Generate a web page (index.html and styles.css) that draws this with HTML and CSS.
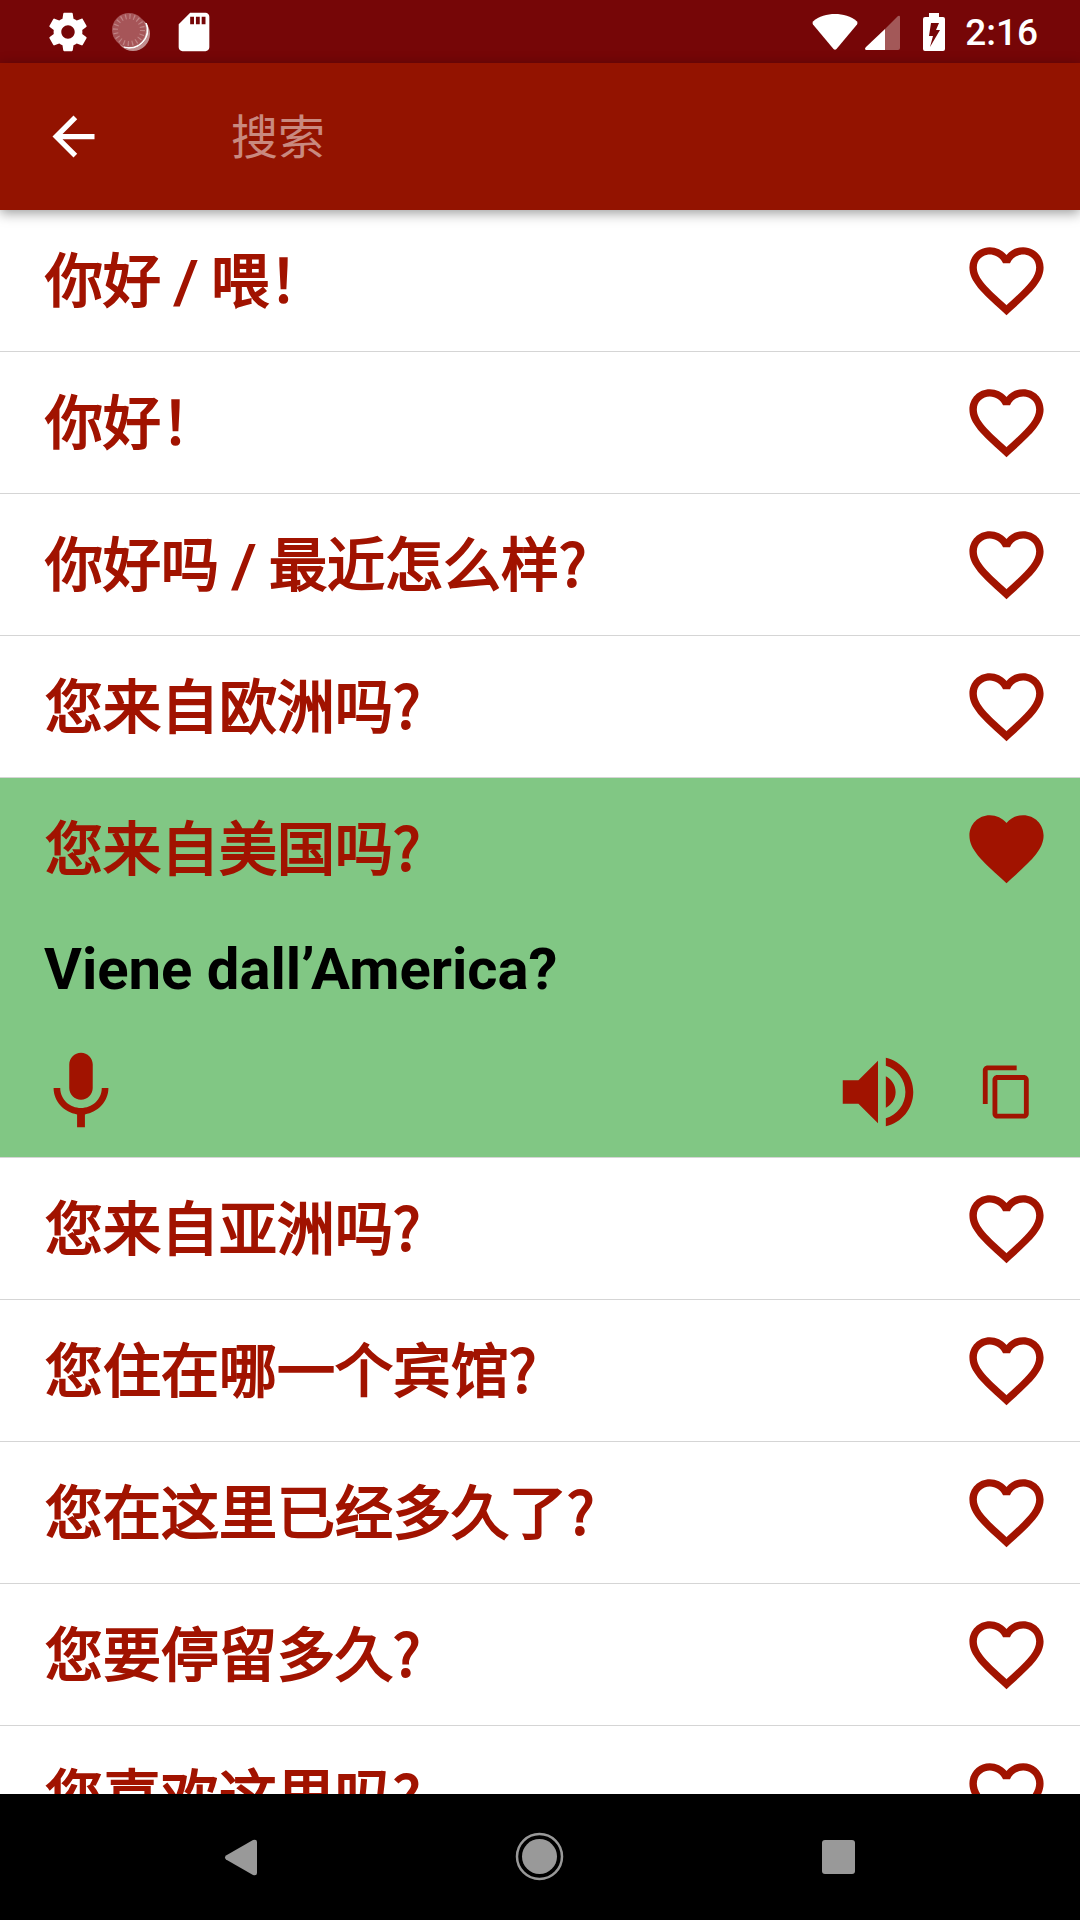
FILE: index.html
```html
<!DOCTYPE html>
<html lang="zh-CN">
<head>
<meta charset="utf-8">
<meta name="viewport" content="width=device-width, initial-scale=1">
<title>搜索</title>
<link rel="stylesheet" href="styles.css">
</head>
<body>
<svg class="sprite" aria-hidden="true">
  <symbol id="heart-outline" viewBox="0 0 24 24"><path d="M16.5 3c-1.74 0-3.41.81-4.5 2.09C10.91 3.81 9.24 3 7.5 3 4.42 3 2 5.42 2 8.5c0 3.78 3.4 6.86 8.55 11.54L12 21.35l1.45-1.32C18.6 15.36 22 12.28 22 8.5 22 5.42 19.58 3 16.5 3zm-4.4 15.55l-.1.1-.1-.1C7.14 14.24 4 11.39 4 8.5 4 6.5 5.5 5 7.5 5c1.54 0 3.04.99 3.57 2.36h1.87C13.46 5.99 14.96 5 16.5 5c2 0 3.5 1.5 3.5 3.5 0 2.89-3.14 5.74-7.9 10.05z"/></symbol>
  <symbol id="heart" viewBox="0 0 24 24"><path d="M12 21.35l-1.45-1.32C5.4 15.36 2 12.28 2 8.5 2 5.42 4.42 3 7.5 3c1.74 0 3.41.81 4.5 2.09C13.09 3.81 14.76 3 16.5 3 19.58 3 22 5.42 22 8.5c0 3.78-3.4 6.86-8.55 11.54L12 21.35z"/></symbol>
</svg>

<div class="status-bar">
  <div class="status-group status-notices">
    <svg class="notice-icon" viewBox="0 0 24 24"><path d="M19.43 12.98c.04-.32.07-.64.07-.98s-.03-.66-.07-.98l2.11-1.65c.19-.15.24-.42.12-.64l-2-3.46c-.12-.22-.39-.3-.61-.22l-2.49 1c-.52-.4-1.08-.73-1.69-.98l-.38-2.65C14.46 2.18 14.25 2 14 2h-4c-.25 0-.46.18-.49.42l-.38 2.65c-.61.25-1.17.59-1.69.98l-2.49-1c-.23-.09-.49 0-.61.22l-2 3.46c-.13.22-.07.49.12.64l2.11 1.65c-.04.32-.07.65-.07.98s.03.66.07.98l-2.11 1.65c-.19.15-.24.42-.12.64l2 3.46c.12.22.39.3.61.22l2.49-1c.52.4 1.08.73 1.69.98l.38 2.65c.03.24.24.42.49.42h4c.25 0 .46-.18.49-.42l.38-2.65c.61-.25 1.17-.59 1.69-.98l2.49 1c.23.09.49 0 .61-.22l2-3.46c.12-.22.07-.49-.12-.64l-2.11-1.65zM12 15.5c-1.93 0-3.5-1.57-3.5-3.5s1.57-3.5 3.5-3.5 3.5 1.57 3.5 3.5-1.57 3.5-3.5 3.5z"/></svg>
    <svg class="notice-icon" viewBox="0 0 46 46">
      <circle cx="25" cy="25" r="17" fill-opacity=".55"/>
      <path d="M38 14A18 18 0 0 1 16 38A18 18 0 0 0 39 16z" stroke="currentColor"/>
      <circle cx="21" cy="21" r="17" fill="#a65558"/>
      <circle cx="21" cy="21" r="13.5" fill="none" stroke="#c08485" stroke-width="5" stroke-dasharray="1.2 3.041"/>
    </svg>
    <svg class="notice-icon" viewBox="0 0 24 24"><path d="M18 2h-8L4.02 8 4 20c0 1.1.9 2 2 2h12c1.1 0 2-.9 2-2V4c0-1.1-.9-2-2-2zm-6 6h-2V4h2v4zm3 0h-2V4h2v4zm3 0h-2V4h2v4z"/></svg>
  </div>
  <div class="status-group status-system">
    <svg class="wifi-icon" viewBox="0 0 46 38"><path d="M1 8.500C7 3 15 1 23 1s16 2 22 7.500q1 1.500 0 3L24.500 36q-1.500 1.500-3 0L1 11.500q-1-1.500 0-3z"/></svg>
    <svg class="signal-icon" viewBox="0 0 36 36"><path d="M20 14v21h13q2 0 2-2V2q0-2-2-1z" fill-opacity=".33"/><path d="M20 14v21H1q-2-1 0-3z"/></svg>
    <svg class="battery-icon" viewBox="0 0 22 38"><path fill-rule="evenodd" d="M6 0h10v4h4q2 0 2 2v30q0 2-2 2H2q-2 0-2-2V6q0-2 2-2h4zM8 10L6 23h4L7 34l10-17h-4l3-7z"/></svg>
    <time class="clock">2:16</time>
  </div>
</div>

<header class="app-bar">
  <button class="icon-button" type="button" aria-label="返回"><svg class="back-icon" viewBox="0 0 24 24"><path d="M20 11H7.830l5.590-5.590L12 4l-8 8 8 8 1.410-1.410L7.830 13H20v-2z"/></svg></button>
  <input class="search" type="search" placeholder="搜索" aria-label="搜索">
</header>

<main class="content">
  <ul class="phrases">
    <li class="phrase"><div class="phrase-head"><span class="phrase-text">你好 <span class="slash">/</span> 喂！</span><button class="icon-button" type="button" aria-label="收藏"><svg class="heart-icon"><use href="#heart-outline"/></svg></button></div></li>
    <li class="phrase"><div class="phrase-head"><span class="phrase-text">你好！</span><button class="icon-button" type="button" aria-label="收藏"><svg class="heart-icon"><use href="#heart-outline"/></svg></button></div></li>
    <li class="phrase"><div class="phrase-head"><span class="phrase-text">你好吗 <span class="slash">/</span> 最近怎么样?</span><button class="icon-button" type="button" aria-label="收藏"><svg class="heart-icon"><use href="#heart-outline"/></svg></button></div></li>
    <li class="phrase"><div class="phrase-head"><span class="phrase-text">您来自欧洲吗?</span><button class="icon-button" type="button" aria-label="收藏"><svg class="heart-icon"><use href="#heart-outline"/></svg></button></div></li>
    <li class="phrase phrase-open">
      <div class="phrase-head"><span class="phrase-text">您来自美国吗?</span><button class="icon-button" type="button" aria-label="取消收藏"><svg class="heart-icon"><use href="#heart"/></svg></button></div>
      <p class="translation" lang="it">Viene dall’America?</p>
      <div class="actions">
        <button class="icon-button action-record" type="button" aria-label="录音"><svg class="action-icon" viewBox="0 0 24 24"><path d="M12 14c1.660 0 2.990-1.340 2.990-3L15 5c0-1.660-1.340-3-3-3S9 3.340 9 5v6c0 1.660 1.340 3 3 3zm5.300-3c0 3-2.540 5.100-5.300 5.100S6.700 14 6.700 11H5c0 3.410 2.720 6.230 6 6.720V21h2v-3.280c3.280-.48 6-3.300 6-6.720h-1.700z"/></svg></button>
        <button class="icon-button" type="button" aria-label="播放"><svg class="action-icon" viewBox="0 0 24 24"><path d="M3 9v6h4l5 5V4L7 9H3zm13.500 3c0-1.770-1.020-3.290-2.500-4.030v8.050c1.480-.73 2.500-2.250 2.500-4.020zM14 3.230v2.060c2.890.86 5 3.540 5 6.710s-2.110 5.850-5 6.710v2.060c4.010-.91 7-4.490 7-8.770s-2.990-7.860-7-8.770z"/></svg></button>
        <button class="icon-button action-copy" type="button" aria-label="复制"><svg class="copy-icon" viewBox="0 0 24 24"><path d="M16 1H4c-1.100 0-2 .9-2 2v14h2V3h12V1zm3 4H8c-1.100 0-2 .9-2 2v14c0 1.100.9 2 2 2h11c1.100 0 2-.9 2-2V7c0-1.100-.9-2-2-2zm0 16H8V7h11v14z"/></svg></button>
      </div>
    </li>
    <li class="phrase"><div class="phrase-head"><span class="phrase-text">您来自亚洲吗?</span><button class="icon-button" type="button" aria-label="收藏"><svg class="heart-icon"><use href="#heart-outline"/></svg></button></div></li>
    <li class="phrase"><div class="phrase-head"><span class="phrase-text">您住在哪一个宾馆?</span><button class="icon-button" type="button" aria-label="收藏"><svg class="heart-icon"><use href="#heart-outline"/></svg></button></div></li>
    <li class="phrase"><div class="phrase-head"><span class="phrase-text">您在这里已经多久了?</span><button class="icon-button" type="button" aria-label="收藏"><svg class="heart-icon"><use href="#heart-outline"/></svg></button></div></li>
    <li class="phrase"><div class="phrase-head"><span class="phrase-text">您要停留多久?</span><button class="icon-button" type="button" aria-label="收藏"><svg class="heart-icon"><use href="#heart-outline"/></svg></button></div></li>
    <li class="phrase"><div class="phrase-head"><span class="phrase-text">您喜欢这里吗?</span><button class="icon-button" type="button" aria-label="收藏"><svg class="heart-icon"><use href="#heart-outline"/></svg></button></div></li>
  </ul>
</main>

<nav class="nav-bar" aria-label="系统导航">
  <button class="icon-button" type="button" aria-label="后退"><svg class="nav-icon" viewBox="0 0 50 50"><path d="M10 23.500L37 8q4-1 4 2v31q0 3-4 2L10 27.500q-2-2 0-4z"/></svg></button>
  <button class="icon-button" type="button" aria-label="主屏幕"><svg class="nav-icon" viewBox="0 0 50 50"><circle cx="24.500" cy="24.500" r="17.500"/><circle cx="24.500" cy="24.500" r="22.500" fill="none" stroke="currentColor" stroke-width="2.500"/></svg></button>
  <button class="icon-button" type="button" aria-label="最近任务"><svg class="nav-icon" viewBox="0 0 50 50"><rect x="8" y="8" width="33" height="34" rx="3"/></svg></button>
</nav>
</body>
</html>
```
FILE: styles.css
```css
* {
  box-sizing: border-box;
}

body {
  display: flex;
  flex-direction: column;
  height: 100vh;
  margin: 0;
  background: #fff;
  color: #a11300;
  font-family: "Noto Sans CJK SC", sans-serif;
}

svg {
  display: block;
  fill: currentColor;
}

.sprite {
  position: absolute;
  width: 0;
  height: 0;
}

.icon-button {
  display: flex;
  flex: none;
  padding: 0;
  border: 0;
  background: none;
  color: inherit;
}

/* Status bar */

.status-bar {
  display: flex;
  flex: none;
  align-items: center;
  justify-content: space-between;
  height: 63px;
  padding: 0 42px 0 45px;
  background: #760607;
  color: #fff;
}

.status-group {
  display: flex;
  align-items: center;
}

.status-notices {
  gap: 17px;
}

.notice-icon {
  width: 46px;
  height: 46px;
}

.wifi-icon {
  width: 46px;
  height: 38px;
}

.signal-icon {
  width: 36px;
  height: 36px;
  margin: 2px 22px 0 7px;
}

.battery-icon {
  width: 22px;
  height: 38px;
}

.clock {
  margin-left: 20px;
  padding-top: 2px;
  font: 500 37px/44px Roboto, sans-serif;
}

/* Search bar */

.app-bar {
  display: flex;
  flex: none;
  align-items: center;
  gap: 126px;
  height: 147px;
  padding: 0 42px;
  background: #931300;
  box-shadow: 0 3px 12px rgba(0, 0, 0, 0.4);
  color: #fff;
  z-index: 1;
}

.back-icon {
  width: 63px;
  height: 63px;
}

.search {
  flex: 1;
  min-width: 0;
  height: 94px;
  padding: 2px 0 0;
  border: 0;
  outline: 0;
  background: none;
  color: #fff;
  font: 400 47px/68px Roboto, "Noto Sans CJK SC", sans-serif;
}

.search::placeholder {
  color: rgba(255, 255, 255, 0.5);
}

/* Phrase list */

.content {
  flex: 1;
  min-height: 0;
  overflow: hidden;
}

.phrases {
  margin: 0;
  padding: 0;
  list-style: none;
}

.phrase {
  border-bottom: 1px solid #d5d5d5;
}

.phrase-open {
  padding-bottom: 18px;
  background: #81c784;
}

.phrase-head {
  display: flex;
  align-items: center;
  justify-content: space-between;
  height: 141px;
  padding: 0 29px 0 45px;
}

.phrase-text {
  padding-bottom: 7px;
  font-size: 58px;
  font-weight: 400;
  line-height: 84px;
  white-space: nowrap;
  -webkit-text-stroke: 2px currentColor;
}

.slash {
  font-family: Roboto, sans-serif;
  line-height: 1px;
}

.heart-icon {
  width: 89px;
  height: 89px;
}

.translation {
  margin: 0 44px 26px;
  color: #000;
  font: 700 58px/100px Roboto, sans-serif;
}

.actions {
  display: flex;
  align-items: center;
  padding: 0 44px 0 34px;
}

.action-record {
  margin-right: auto;
}

.action-icon {
  width: 94px;
  height: 94px;
}

.action-copy {
  margin-left: 53px;
}

.copy-icon {
  width: 58px;
  height: 58px;
}

/* Navigation bar */

.nav-bar {
  display: grid;
  flex: none;
  grid-template-columns: repeat(3, 1fr);
  place-items: center;
  height: 126px;
  padding: 0 92px;
  background: #000;
  color: #999;
}

.nav-icon {
  width: 50px;
  height: 50px;
}
```
